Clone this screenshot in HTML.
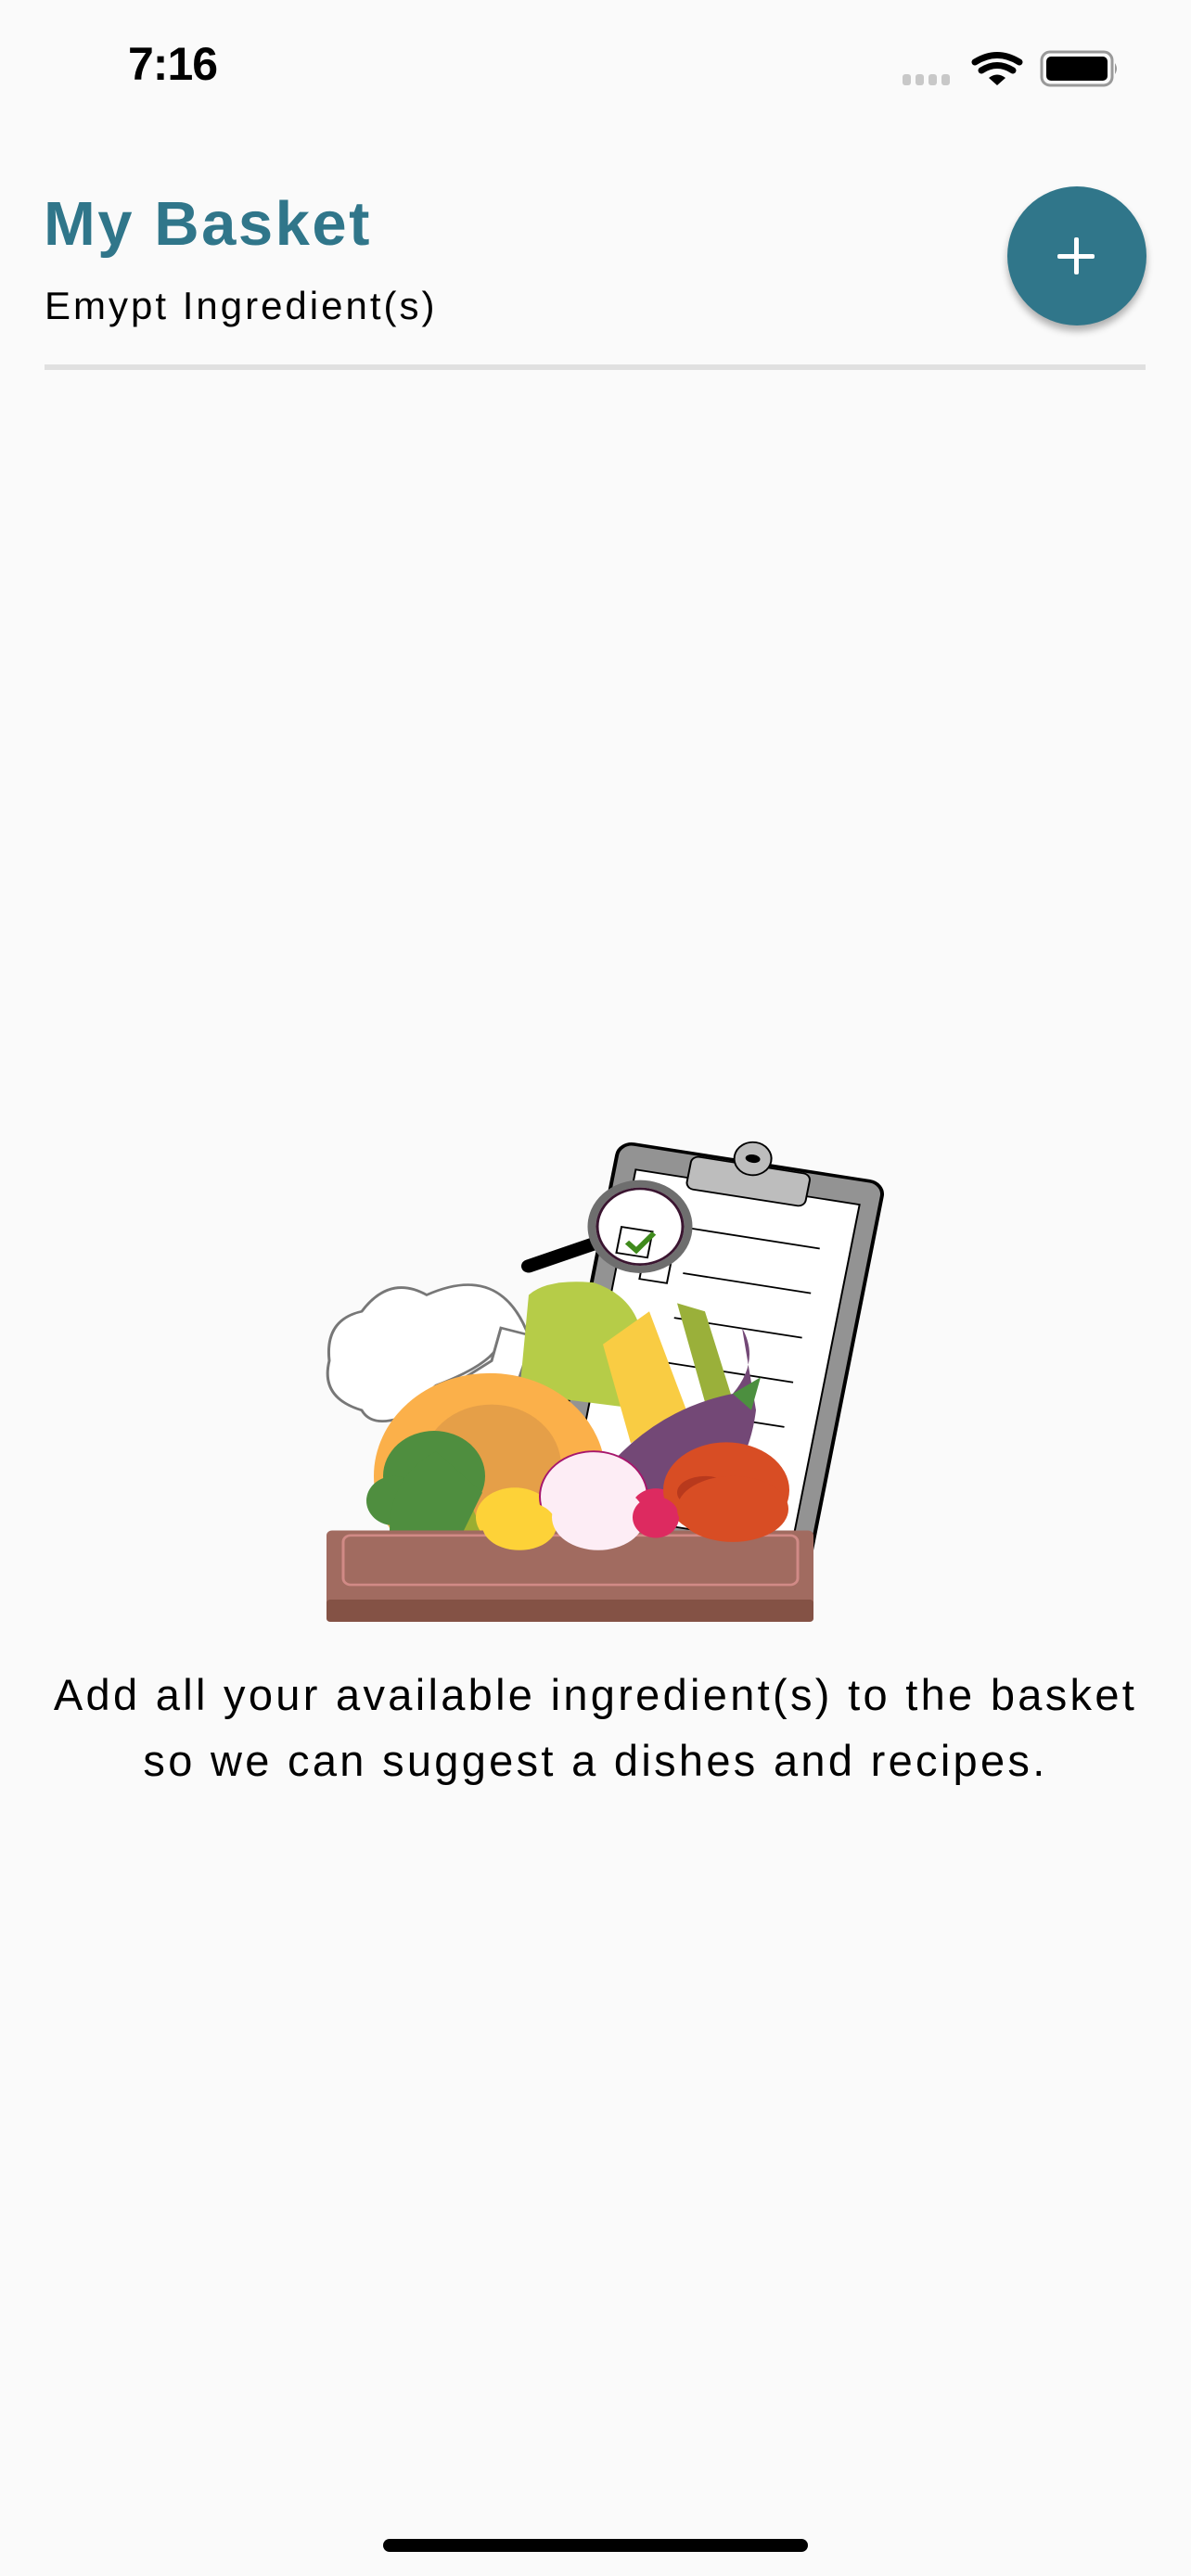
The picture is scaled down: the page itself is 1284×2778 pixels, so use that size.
<!DOCTYPE html>
<html><head><meta charset="utf-8"><style>
html,body{margin:0;padding:0;background:#fafafa;}
body{width:1284px;height:2778px;position:relative;overflow:hidden;font-family:"Liberation Sans",sans-serif;}
.abs{position:absolute;}
</style></head><body>
<div class="abs" style="left:138px;top:40px;font-size:50px;font-weight:bold;letter-spacing:-1px;color:#000;">7:16</div>
<svg class="abs" style="left:965px;top:50px" width="240" height="50" viewBox="0 0 240 50">
<g fill="#c8c8c8"><rect x="8" y="30" width="9" height="12" rx="3"/><rect x="22" y="30" width="9" height="12" rx="3"/><rect x="36" y="30" width="9" height="12" rx="3"/><rect x="50" y="30" width="9" height="12" rx="3"/></g>
<g fill="none" stroke="#000" stroke-width="7" stroke-linecap="round"><path d="M86 17 Q110 2 134 17"/><path d="M93 26 Q110 15 127 26"/></g>
<path d="M101 34 L110 42 L119 34 Q110 27 101 34Z" fill="#000"/>
<rect x="158" y="6" width="76" height="36" rx="9" fill="none" stroke="#999" stroke-width="3"/>
<rect x="163" y="11" width="66" height="26" rx="5" fill="#000"/>
<path d="M237 18 Q241 24 237 30Z" fill="#999"/>
</svg>
<div class="abs" style="left:47px;top:203px;font-size:67px;font-weight:bold;color:#30768a;letter-spacing:2.5px;">My Basket</div>
<div class="abs" style="left:48px;top:306px;font-size:42px;color:#000;letter-spacing:3px;">Emypt Ingredient(s)</div>
<div class="abs" style="left:1086px;top:201px;width:150px;height:150px;border-radius:50%;background:#30768a;box-shadow:0 6px 8px rgba(0,0,0,0.3);"></div>
<div class="abs" style="left:1140px;top:274px;width:40px;height:5px;background:#fff;border-radius:2px;"></div>
<div class="abs" style="left:1157.5px;top:256px;width:5px;height:40px;background:#fff;border-radius:2px;"></div>
<div class="abs" style="left:48px;top:393px;width:1187px;height:6px;background:#e0e0e0;"></div>

<svg class="abs" style="left:0;top:0" width="1284" height="1830" viewBox="0 0 1284 1830">
<g transform="translate(0 1210) scale(1 0.888) translate(0 -1210)">
<g transform="rotate(10 765 1490)">
<rect x="625" y="1255" width="290" height="470" rx="16" fill="#939393" stroke="#000" stroke-width="4"/>
<rect x="648" y="1285" width="245" height="420" fill="#fff" stroke="#000" stroke-width="2"/>
<rect x="705" y="1258" width="130" height="40" rx="8" fill="#bdbdbd" stroke="#000" stroke-width="2"/>
<circle cx="770" cy="1250" r="20" fill="#bdbdbd" stroke="#000" stroke-width="2"/><ellipse cx="770" cy="1250" rx="8" ry="5" fill="#000"/>
<g stroke="#000" stroke-width="2"><line x1="720" y1="1345" x2="860" y2="1345"/><line x1="720" y1="1400" x2="860" y2="1400"/><line x1="720" y1="1455" x2="860" y2="1455"/><line x1="720" y1="1510" x2="860" y2="1510"/><line x1="720" y1="1565" x2="860" y2="1565"/></g>
<rect x="675" y="1385" width="30" height="30" fill="#fff" stroke="#000" stroke-width="2"/>
</g>
<line x1="570" y1="1385" x2="640" y2="1358" stroke="#000" stroke-width="16" stroke-linecap="round"/>
<circle cx="690" cy="1337" r="52" fill="#fff" stroke="#6e6e6e" stroke-width="9"/>
<circle cx="690" cy="1337" r="46" fill="none" stroke="#3a1530" stroke-width="3"/>
<rect x="667" y="1340" width="34" height="32" fill="#fff" stroke="#000" stroke-width="2" transform="rotate(10 684 1356)"/>
<path d="M676 1356 L686 1366 L705 1345" fill="none" stroke="#3f8a1c" stroke-width="6"/>
<path d="M570 1470 Q540 1380 460 1420 Q420 1395 390 1440 Q350 1450 355 1500 Q345 1545 390 1560 Q400 1580 430 1570 L470 1530 Q540 1500 540 1470Z" fill="#fff" stroke="#777" stroke-width="3"/>
<path d="M445 1560 L530 1500 L540 1460 L575 1470 L560 1520 Z" fill="#fff" stroke="#777" stroke-width="3"/>
<path d="M570 1420 Q590 1400 640 1405 Q680 1420 690 1460 L700 1560 L560 1540 Z" fill="#b6cc48"/>
<path d="M650 1480 L700 1440 L740 1560 L680 1600 Z" fill="#f9cc43"/>
<path d="M730 1430 L760 1440 L810 1620 L780 1630Z" fill="#9ab03a"/>
<circle cx="528" cy="1640" r="125" fill="#fbb04a"/>
<circle cx="530" cy="1628" r="75" fill="#e59f48"/>
<path d="M640 1650 Q700 1560 790 1540 Q820 1500 800 1460 L815 1560 Q805 1650 740 1690 L650 1700Z" fill="#734876"/>
<path d="M790 1540 L820 1520 L810 1560Z" fill="#4c8f3f"/>
<circle cx="468" cy="1640" r="55" fill="#4f8e3f"/>
<circle cx="425" cy="1670" r="30" fill="#4f8e3f"/>
<path d="M460 1700 L510 1680 L530 1735 L470 1740Z" fill="#9aae32"/>
<ellipse cx="555" cy="1690" rx="42" ry="36" fill="#fdd238"/>
<ellipse cx="640" cy="1665" rx="58" ry="55" fill="#fdedf5" stroke="#a7166c" stroke-width="2"/>
<circle cx="707" cy="1682" r="27" fill="#dd2a60"/>
<ellipse cx="783" cy="1657" rx="68" ry="58" fill="#d84d24"/>
<ellipse cx="760" cy="1660" rx="30" ry="20" fill="#b8391d"/>
<rect x="352" y="1706" width="525" height="111" rx="6" fill="#a16b60"/>
<rect x="352" y="1790" width="525" height="27" rx="4" fill="#845245"/>
<rect x="370" y="1712" width="490" height="60" rx="8" fill="none" stroke="#d18a86" stroke-width="3"/>
<path d="M420 1706 Q420 1640 470 1610 L520 1660 L500 1706Z" fill="#4f8e3f"/>
<ellipse cx="560" cy="1700" rx="40" ry="30" fill="#fdd238"/>
<ellipse cx="645" cy="1690" rx="50" ry="40" fill="#fdedf5"/>
<circle cx="707" cy="1690" r="25" fill="#dd2a60"/>
<ellipse cx="790" cy="1680" rx="60" ry="40" fill="#d84d24"/>
</g>
</svg>

<div class="abs" style="left:0;top:1792px;width:1284px;text-align:center;font-size:47px;line-height:71px;color:#000;letter-spacing:3.3px;white-space:nowrap;">Add all your available ingredient(s) to the basket<br>so we can suggest a dishes and recipes.</div>
<div class="abs" style="left:413px;top:2738px;width:458px;height:14px;border-radius:7px;background:#000;"></div>
</body></html>
